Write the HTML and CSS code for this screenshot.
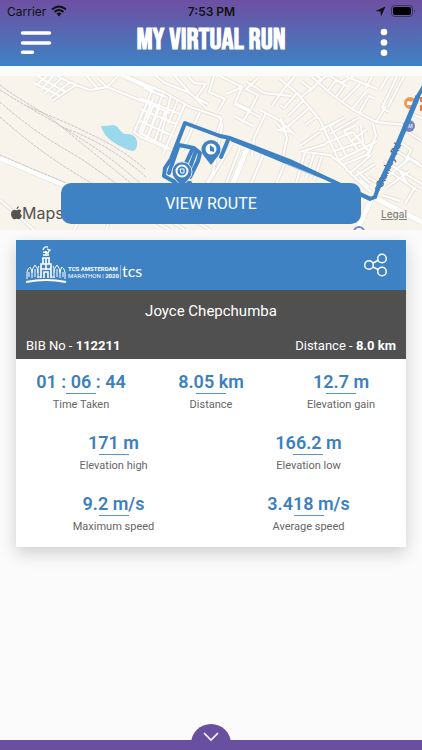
FILE: index.html
```html
<!DOCTYPE html>
<html lang="en">
<head>
    <meta charset="UTF-8">
    <meta name="viewport" content="width=device-width, initial-scale=1.0">
    <title>My Virtual Run</title>
    <link rel="stylesheet" href="styles.css">
</head>
<body>
    <header class="header">
        <div class="status-bar">
            <div class="status-left">
                <span>Carrier</span>
                <svg width="16" height="12" viewBox="0 0 16 12">
                    <path d="M1 4.500Q8-1.500 15 4.500M3.500 7Q8 3 12.500 7" fill="none" stroke="#111" stroke-width="2"/>
                    <path d="M5.500 8.500Q8 6.500 10.500 8.500L8 11.500z" fill="#111"/>
                </svg>
            </div>
            <span class="status-time">7:53 PM</span>
            <div class="status-right">
                <svg width="11" height="11" viewBox="0 0 11 11"><path d="M10.500.5L6 10.500 5.500 5.500.5 5z" fill="#111"/></svg>
                <svg width="25" height="12" viewBox="0 0 25 12">
                    <rect x=".5" y=".5" width="21" height="11" rx="3" fill="none" stroke="#111" stroke-opacity=".5"/>
                    <rect x="2" y="2" width="18" height="8" rx="2" fill="#000"/>
                    <path d="M23 4q1.500 2 0 4z" fill="#111" fill-opacity=".6"/>
                </svg>
            </div>
        </div>
        <div class="title-bar">
            <button type="button" class="icon-btn" aria-label="Menu">
                <svg width="32" height="24" viewBox="0 0 32 24"><path d="M2.500 3h27M2.500 13h27M2.500 22.200h10" stroke="#fff" stroke-width="3.500" stroke-linecap="round"/></svg>
            </button>
            <h1>MY VIRTUAL RUN</h1>
            <button type="button" class="icon-btn" aria-label="More options">
                <svg width="32" height="28" viewBox="0 0 32 28"><g fill="#fff"><circle cx="14" cy="4" r="3.300"/><circle cx="14" cy="14.500" r="3.300"/><circle cx="14" cy="24.700" r="3.300"/></g></svg>
            </button>
        </div>
    </header>

    <section class="map">
        <svg class="map-art" viewBox="0 0 422 154" preserveAspectRatio="xMidYMid slice">
            <rect width="422" height="154" fill="#f8f4ec"/>
            <defs>
                <g id="roads">
                    <path d="M57 0L76 9 90 14 107 11 147 27 170 37M76 9L52 25M70 6L51 21M62 2L44 18M53 0L41 14M47 0L35 10M34 7L60 20M37 0L66 16M97 12L87 0M107 11L97 2M107 11L118 0M122 0L152 14 147 27M126 0L157 13M147 27L134 56 141 61 168 73M153 30L141 59M159 33L147 63M165 36L154 67"/>
                    <path d="M140 7L164 16 190 31 220 41 222 50 213 96 205 110M156 0L165 7 190 17 206 32M175 0L190 17M188 0L194 7 206 8M206 8L196 22 208 28M214 0L209 16 225 23 218 35M220 0L242 11 235 27 250 34 242 47M240 12L226 18M258 2L246 13 258 19 251 33M247 6L264 17 291 20M234 28L260 41M234 40L253 50"/>
                    <path d="M140 22L180 38M140 33L176 48M140 45L173 60M140 57L174 75M144 12L166 21M163 17L147 62M171 19L160 65M178 23L168 48M185 28L163 78M153 23L139 57"/>
                    <path d="M200 36L182 75M207 64L188 108M232 68L208 108M240 72L226 108M264 77L251 108M285 87L276 108M222 42L216 60M266 37L254 62 252 80M260 34L279 44 294 58M272 30L283 14 295 0M281 42L287 62 283 81M276 47L285 56M292 56L278 54"/>
                    <path d="M280 3L297 17 320 44 338 83 350 97 371 116M301 21L311 13 301 5M311 13L326 0M297 17L284 32 280 29M303 25L288 40M309 32L286 52M316 41L305 49M320 56L301 69M326 68L300 76"/>
                    <path d="M311 0L330 17 352 33 376 46 405 49M317 0L321 3 310 15M328 15L336 4 347 10M336 21L344 10M343 25L360 8M352 33L366 16M359 37L369 20 375 23M376 46L386 30M397 0L382 32 389 36M404 0L388 31M330 0L341 7 354 0M345 0L377 13M372 0L366 12M388 0L380 14"/>
                    <path d="M326 67L353 56 370 77M334 75L364 65M339 84L376 66M342 89L369 78 375 63M345 41L330 50 347 81M356 49L344 55 358 74M340 44L320 54M361 50L363 67M367 53L350 66M373 48L376 60 366 80M330 58L358 42"/>
                    <path d="M305 76L330 79 344 90M305 76L296 108M314 78L306 102M322 80L314 104M350 97L371 79M354 101L375 88M360 103L369 111M368 101L376 106M357 95L370 107"/>
                    <path d="M384 85L422 108M392 72L422 91M403 53L422 65M409 37L422 42M389 99L410 82 420 88M399 94L407 107M386 112L410 95M382 119L400 125M392 97L418 115M405 128L415 111M400 66L411 74 404 88"/>
                    <path d="M0 124L34 154M81 140L74 154M111 140L106 154M151 143L170 154M168 143L185 154M195 145L210 154"/>
                </g>
            </defs>
            <use href="#roads" class="road-edge"/>
            <use href="#roads" class="road"/>
            <path class="avenue-edge" d="M0 82L64 109M249 68L232 110M371 124L357 154M375 122L422 146"/>
            <path class="avenue" d="M0 82L64 109M249 68L232 110M371 124L357 154M375 122L422 146"/>
            <g class="rail">
                <path d="M0 9C25 28 42 34 62 51S108 88 133 109"/>
                <path d="M27 30C45 38 70 48 84 55S120 71 146 94"/>
                <path d="M0 14C25 30 45 40 72 57S110 81 141 108"/>
                <path d="M62 51C90 61 120 77 146 101"/>
                <path d="M0 26C35 57 55 67 83 84L117 108"/>
                <path d="M0 41C28 66 55 86 93 108"/>
                <path d="M0 79L28 91 66 107"/>
            </g>
            <path d="M101 50Q108 50 114 49C119 50 121 59 127 58C135 58 138 64 137 70Q136 75 132 75Q124 73 113 66Q103 59 101 50z" fill="#9ad9ec"/>
            <g fill="none" stroke="#3e82c4" stroke-linejoin="round" stroke-linecap="round">
                <path stroke-width="4" d="M190 107L173 105 164 100 165 92 171 83 185 47 220 60 230 62 290 85 370 123 375 121 378 112 393 80 418 20 424 10"/>
                <path stroke-width="4" d="M228 64L221 81M179 69L194 72 200 77 198 85 190 101M178 71L169 97M192 74L186 87M196 75L190 91"/>
                <path stroke-width="3" d="M232 64L290 88 335 106 370 122"/>
            </g>
            <path d="M286 88L313 99" stroke="#a7c8e6"/>
            <g transform="translate(182 95)">
                <path d="M0 16L-7 8A10 10 0 1 1 7 8z" fill="#3e82c4" stroke="#e3eaf0"/>
                <circle r="5.500" fill="#3e82c4" stroke="#fff" stroke-width="2"/>
                <path d="M-2-2h4v4h-3z" fill="none" stroke="#fff"/>
            </g>
            <g transform="translate(211 73)">
                <path d="M0 16L-7 7A9.500 9.500 0 1 1 7 7z" fill="#3e82c4"/>
                <circle r="5.500" fill="#fff"/>
                <path d="M-1-4v6l4 1V-1z" fill="#3e82c4"/>
            </g>
            <circle cx="410" cy="27" r="6" fill="#ee9953"/>
            <path d="M407 29v-3l2-1 2 1 2-1v4z" fill="#fff"/>
            <path d="M420 21h2v5h-2zM420 29h2v6h-2z" fill="#ee7b30"/>
            <circle cx="409" cy="50" r="6" fill="#7187c2"/>
            <text x="405" y="52" class="poi-text">AM</text>
            <circle cx="359" cy="156" r="5" fill="#fff" stroke="#7187c2" stroke-width="2"/>
            <text class="road-name" transform="translate(382 112) rotate(-66)">Stanley Rd</text>
            <path d="M377 114L393 80 418 20" fill="none" stroke="#3e82c4" stroke-width="5"/>
        </svg>
        <div class="map-brand">
            <svg width="11" height="14" viewBox="0 0 11 14"><path d="M7.700 0Q8 2.400 5.500 3.300 5.300 1 7.700 0zM5.600 4.200Q9 2.700 10.500 5.100 7.600 7 10.900 9.300 9.400 14.200 6.900 13.100 5.500 12.400 4 13.200C1.600 14-.5 9.500.2 6.500Q1.500 2.800 5.600 4.200z" fill="#55534f"/></svg>
            <span>Maps</span>
        </div>
        <button type="button" class="route-btn">VIEW ROUTE</button>
        <a href="#" class="legal">Legal</a>
    </section>

    <main class="card">
        <div class="card-top">
            <div class="logo">
                <svg width="42" height="38" viewBox="0 0 42 38" fill="none" stroke="#fff">
                    <path d="M1 36Q21 32 41 36" stroke-width="2"/>
                    <path d="M2 33V26q1-4 3-5 2 3 2 6v5M7 27q0-5 3-8 3 3 3 8v5M13 27V22l1-2M40 33V26q-1-4-3-5-2 3-2 6v5M35 27q0-5-3-8-3 3-3 8v5M29 27V22l-1-2M4 26v5M10 23v8M32 23v8M38 26v5M12 31h4M26 31h4"/>
                    <path d="M16 32V18h10v14M18 18v-6h6v6M17 12h8M18 9h6M16 18h10M16 23h10M19 32v-6h4v6M21 12v12" stroke-width="1.600"/>
                    <path d="M21 10V5M18 4q1-4 5-3M22 3l3 1-2 2M18 6l6 1" stroke-width="1.300"/>
                </svg>
                <div class="logo-text">
                    <b>TCS AMSTERDAM</b>
                    <span>MARATHON | <b>2020</b></span>
                </div>
                <span class="logo-tcs">tcs</span>
            </div>
            <button type="button" class="share-btn" aria-label="Share">
                <svg width="24" height="24" viewBox="0 0 24 24" fill="none" stroke="#fff" stroke-width="1.500"><circle cx="5" cy="12" r="4.300"/><circle cx="18" cy="5.500" r="4.300"/><circle cx="18" cy="18.500" r="4.300"/><path d="M9 10l5-2.500M9 14l5 2.500"/></svg>
            </button>
        </div>
        <div class="runner">
            <h2>Joyce Chepchumba</h2>
            <div class="runner-info">
                <span>BIB No - <b>112211</b></span>
                <span>Distance - <b>8.0 km</b></span>
            </div>
        </div>
        <div class="stats">
            <div class="stats-row">
                <div class="stat"><strong>01 : 06 : 44</strong><span>Time Taken</span></div>
                <div class="stat"><strong>8.05 km</strong><span>Distance</span></div>
                <div class="stat"><strong>12.7 m</strong><span>Elevation gain</span></div>
            </div>
            <div class="stats-row">
                <div class="stat"><strong>171 m</strong><span>Elevation high</span></div>
                <div class="stat"><strong>166.2 m</strong><span>Elevation low</span></div>
            </div>
            <div class="stats-row">
                <div class="stat"><strong>9.2 m/s</strong><span>Maximum speed</span></div>
                <div class="stat"><strong>3.418 m/s</strong><span>Average speed</span></div>
            </div>
        </div>
    </main>

    <footer class="footer">
        <button type="button" class="footer-btn" aria-label="Toggle panel">
            <svg width="16" height="10" viewBox="0 0 16 10"><path d="M1 1l7 7 7-7" fill="none" stroke="#fff" stroke-width="1.600"/></svg>
        </button>
    </footer>
</body>
</html>
```
FILE: styles.css
```css
* {
    box-sizing: border-box;
}
body {
    font-family: Roboto, sans-serif;
    background-color: #fbfbfb;
    margin: 0;
    min-height: 100vh;
    display: flex;
    flex-direction: column;
}
button {
    border: none;
    background: none;
    padding: 0;
    cursor: pointer;
    font-family: inherit;
}
svg {
    display: block;
}
.header {
    background: linear-gradient(#6e4fa2, #3e82c4);
    padding-bottom: 8px;
}
.status-bar {
    display: grid;
    grid-template-columns: 1fr auto 1fr;
    align-items: center;
    height: 22px;
    padding: 0 6px 0 7px;
    font-family: Inter, sans-serif;
    font-size: 12px;
    color: #111;
}
.status-left,
.status-right {
    display: flex;
    align-items: center;
    gap: 5px;
}
.status-right {
    justify-content: flex-end;
}
.status-time {
    font-weight: 600;
}
.title-bar {
    display: flex;
    align-items: center;
    justify-content: space-between;
    height: 36px;
    padding: 4px 20px 0;
}
.title-bar h1 {
    margin: 0;
    padding-bottom: 4px;
    font-family: "Bebas Neue", "Liberation Sans Narrow", Roboto, sans-serif;
    font-size: 30px;
    line-height: 32px;
    font-weight: bold;
    color: #fff;
}
.map {
    position: relative;
    display: flex;
    justify-content: center;
    align-items: flex-end;
    height: 154px;
    margin-top: 10px;
    padding-bottom: 6px;
    overflow: hidden;
}
.map-art {
    position: absolute;
    top: 0;
    left: 0;
    width: 100%;
    height: 100%;
}
.road-edge,
.road,
.avenue-edge,
.avenue {
    fill: none;
    stroke-linejoin: round;
}
.road-edge {
    stroke: #e6e2db;
    stroke-width: 4;
}
.road {
    stroke: #fff;
    stroke-width: 2;
}
.avenue-edge {
    stroke: #e2ded7;
    stroke-width: 6;
}
.avenue {
    stroke: #fff;
    stroke-width: 5;
}
.rail {
    fill: none;
    stroke: #c9c6c1;
    stroke-dasharray: 3 1;
}
.poi-text {
    font-size: 5px;
    fill: #fff;
}
.road-name {
    font-size: 10px;
    font-weight: 500;
    fill: #55534f;
}
.map-brand {
    position: absolute;
    left: 11px;
    bottom: 8px;
    display: flex;
    align-items: center;
    font-family: Inter, sans-serif;
    font-size: 16px;
    line-height: 18px;
    color: #55534f;
}
.route-btn {
    position: relative;
    width: 71%;
    height: 41px;
    border-radius: 10px;
    background-color: #3e82c4;
    color: #fff;
    font-size: 16px;
}
.legal {
    position: absolute;
    right: 15px;
    bottom: 9px;
    font-family: Inter, sans-serif;
    font-size: 10px;
    line-height: 14px;
    font-weight: 500;
    color: #85827d;
}
.card {
    margin: 10px 16px 0;
    background-color: #fff;
    box-shadow: 0 6px 16px rgba(0, 0, 0, 0.18);
}
.card-top {
    display: flex;
    align-items: center;
    justify-content: space-between;
    height: 50px;
    padding: 0 18px 0 9px;
    background-color: #3e82c4;
}
.logo {
    display: flex;
    align-items: center;
    color: #fff;
}
.logo-text {
    display: flex;
    flex-direction: column;
    margin: 14px 1px 0 1px;
    padding-right: 1px;
    border-right: 1px solid #8fb7dd;
    font-size: 6px;
    line-height: 7px;
}
.logo-tcs {
    margin-top: 11px;
    font-family: Lato, sans-serif;
    font-size: 16px;
    line-height: 16px;
}
.runner {
    padding: 11px 10px 3px;
    background-color: #505050;
    color: #fff;
}
.runner h2 {
    margin: 0 0 15px;
    font-size: 15px;
    line-height: 20px;
    font-weight: 400;
    text-align: center;
}
.runner-info {
    display: flex;
    justify-content: space-between;
    font-size: 13px;
    line-height: 20px;
}
.stats {
    padding: 12px 0;
}
.stats-row {
    display: flex;
    justify-content: space-around;
    margin-bottom: 19px;
}
.stats-row:last-child {
    margin-bottom: 0;
}
.stat {
    flex: 1;
    display: flex;
    flex-direction: column;
    align-items: center;
}
.stat strong {
    font-size: 18px;
    line-height: 22px;
    font-weight: 600;
    color: #3e7fbe;
}
.stat strong::after {
    content: "";
    display: block;
    width: 30px;
    height: 1px;
    margin: 0 auto;
    background-color: #5b94cb;
}
.stat span {
    margin-top: 3px;
    font-size: 11px;
    line-height: 16px;
    color: #666;
}
.footer {
    display: flex;
    justify-content: center;
    height: 10px;
    margin-top: auto;
    background-color: #694fa0;
}
.footer-btn {
    display: flex;
    justify-content: center;
    width: 40px;
    height: 26px;
    margin-top: -16px;
    padding-top: 8px;
    border-radius: 20px 20px 0 0;
    background-color: #694fa0;
}
```
